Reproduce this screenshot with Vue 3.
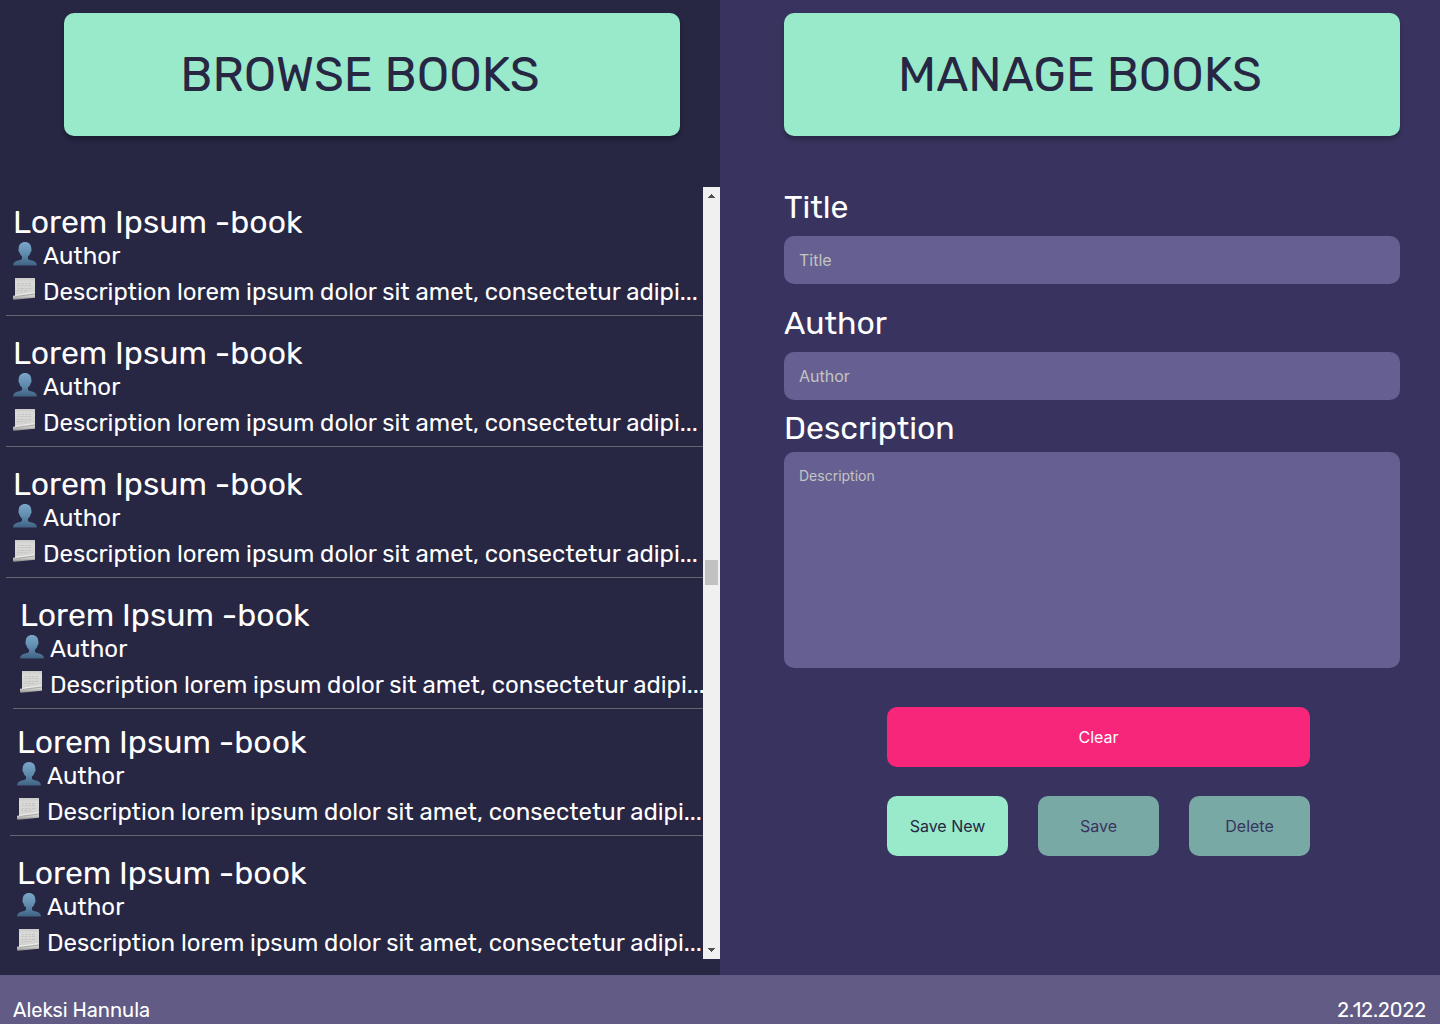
<script setup>
import { ref } from 'vue'

const books = ref([
  { id: 1, shift: '' },
  { id: 2, shift: '' },
  { id: 3, shift: '' },
  { id: 4, shift: 'shift-large' },
  { id: 5, shift: 'shift-small tight' },
  { id: 6, shift: 'shift-small' },
].map((b) => ({
  ...b,
  title: 'Lorem Ipsum -book',
  author: 'Author',
  description: 'Description lorem ipsum dolor sit amet, consectetur adipi...',
})))

const form = ref({ title: '', author: '', description: '' })

function clearForm() {
  form.value = { title: '', author: '', description: '' }
}
</script>

<template>
  <div class="page">
    <svg class="symbols" aria-hidden="true">
      <defs>
        <linearGradient id="person-fill" x1="0" y1="0" x2="0" y2="1">
          <stop offset="0" stop-color="#7ba6c9" />
          <stop offset="0.5" stop-color="#608cae" />
          <stop offset="1" stop-color="#416384" />
        </linearGradient>
        <linearGradient id="paper-fill" x1="0" y1="0" x2="0" y2="1">
          <stop offset="0" stop-color="#cacac8" />
          <stop offset="0.2" stop-color="#dadad8" />
          <stop offset="1" stop-color="#cfcfcd" />
        </linearGradient>
        <linearGradient id="roll-fill" x1="0" y1="0" x2="0" y2="1">
          <stop offset="0" stop-color="#e0e0de" />
          <stop offset="0.5" stop-color="#c4c4c2" />
          <stop offset="1" stop-color="#858583" />
        </linearGradient>
        <symbol id="icon-person" viewBox="0 0 24 24">
          <path
            fill="url(#person-fill)"
            d="M12 0C8.200 0 5.700 2.400 5.700 6.200c0 .8-.4 1.200-.2 2.300.2 1 .7 1.300 1 2.200.5 1.700 1.300 2.800 2.500 3.800v2c0 1.300-1.800 1.500-4.200 2.100C1.800 19.400.3 20.500 0 23.500h24c-.3-3-1.800-4.100-4.800-4.900-2.400-.6-4.200-.8-4.200-2.100v-2c1.200-1 2-2.100 2.500-3.800.3-.9.800-1.200 1-2.200.2-1.100-.2-1.500-.2-2.300C18.300 2.400 15.800 0 12 0z"
          />
        </symbol>
        <symbol id="icon-page" viewBox="0 0 24 24">
          <path fill="url(#paper-fill)" d="M2 0h20v19L2 20z" />
          <path
            stroke="#c4c4c2"
            stroke-width="1"
            stroke-dasharray="2 1 3 1"
            fill="none"
            d="M5 5.500h13M4.500 7.500H19M5 10.500h13M4 12.500h11"
          />
          <path
            fill="url(#roll-fill)"
            d="M0 18.500c0-.6.500-.9 1.200-.9.500 0 .8.500 1.500.4L22 15.600v4.100L1.600 21.800C.5 21.900 0 21.400 0 20.600z"
          />
          <path stroke="#a9a9a7" fill="none" d="M2.500 18.500L22 16" />
          <path stroke="#eeeeec" fill="none" d="M2 17.300L21.500 14.500" />
        </symbol>
      </defs>
    </svg>

    <main class="columns">
      <section class="panel browse">
        <h1 class="banner">BROWSE BOOKS</h1>
        <div class="viewport">
          <ul class="list">
            <li v-for="book in books" :key="book.id" class="book" :class="book.shift">
              <h2 class="book-title">{{ book.title }}</h2>
              <p class="line">
                <svg class="icon" aria-hidden="true"><use href="#icon-person" /></svg>
                <span>{{ book.author }}</span>
              </p>
              <p class="line">
                <svg class="icon" aria-hidden="true"><use href="#icon-page" /></svg>
                <span>{{ book.description }}</span>
              </p>
            </li>
          </ul>
          <div class="scrollbar" aria-hidden="true">
            <svg class="arrow" viewBox="0 0 17 17" shape-rendering="crispEdges">
              <path fill="#505050" d="M8 7h1v1h1v1h1v1h1v1H5v-1h1V9h1V8h1z" />
            </svg>
            <div class="track-before"></div>
            <div class="thumb"></div>
            <div class="track-after"></div>
            <svg class="arrow" viewBox="0 0 17 17" shape-rendering="crispEdges">
              <path fill="#505050" d="M5 6h7v1h-1v1h-1v1H9v1H8V9H7V8H6V7H5z" />
            </svg>
          </div>
        </div>
      </section>

      <section class="panel manage">
        <h1 class="banner">MANAGE BOOKS</h1>
        <form class="form" @submit.prevent>
          <div class="field">
            <label for="title">Title</label>
            <input id="title" v-model="form.title" type="text" placeholder="Title" />
          </div>
          <div class="field">
            <label for="author">Author</label>
            <input id="author" v-model="form.author" type="text" placeholder="Author" />
          </div>
          <div class="field field-text">
            <label for="description">Description</label>
            <textarea id="description" v-model="form.description" placeholder="Description"></textarea>
          </div>
          <div class="actions">
            <button type="button" class="button clear" @click="clearForm">Clear</button>
            <div class="action-row">
              <button type="submit" class="button">Save New</button>
              <button type="button" class="button" disabled>Save</button>
              <button type="button" class="button" disabled>Delete</button>
            </div>
          </div>
        </form>
      </section>
    </main>

    <footer class="footer">
      <span>Aleksi Hannula</span>
      <span>2.12.2022</span>
    </footer>
  </div>
</template>

<style>
body {
  margin: 0;
  background: #272643;
}
</style>

<style scoped>
.page {
  display: flex;
  flex-direction: column;
  height: 100vh;
  color: #ffffff;
  font-family: Rubik, Inter, sans-serif;
}

.symbols {
  position: absolute;
  width: 0;
  height: 0;
}

.columns {
  display: grid;
  grid-template-columns: minmax(0, 1fr) minmax(0, 1fr);
  grid-template-rows: minmax(0, 1fr);
  flex: 1;
  min-height: 0;
}

.panel {
  display: flex;
  flex-direction: column;
  box-sizing: border-box;
  min-height: 0;
  padding: 13px 0 16px;
}

.browse {
  background: #272643;
}

.manage {
  background: #38345f;
}

.banner {
  flex: none;
  margin: 0 40px 0 64px;
  padding: 32px 24px 31px 0;
  border-radius: 10px;
  background: #98eaca;
  box-shadow: 0 4px 4px rgba(0, 0, 0, 0.25);
  color: #272643;
  font-size: 48px;
  font-weight: 400;
  line-height: 60px;
  text-align: center;
}

.viewport {
  display: flex;
  flex: 1;
  min-height: 0;
  margin-top: 49px;
}

.list {
  flex: 1;
  min-width: 0;
  margin: 0;
  padding: 0;
  overflow: hidden;
  list-style: none;
}

.book {
  margin-left: 6px;
  padding: 19px 0 9px 7px;
  border-bottom: 1px solid #66656f;
  white-space: nowrap;
}

.shift-small {
  margin-left: 10px;
}

.shift-large {
  margin-left: 13px;
}

.tight {
  padding-top: 15px;
}

.book-title {
  margin: 0 0 2px;
  font-size: 32px;
  font-weight: 400;
  line-height: 36px;
}

.line {
  display: flex;
  gap: 6px;
  margin: 0;
  font-size: 24px;
  line-height: 28px;
}

.line + .line {
  margin-top: 8px;
}

.icon {
  flex: none;
  width: 24px;
  height: 24px;
}

.scrollbar {
  display: flex;
  flex-direction: column;
  flex: none;
  width: 17px;
  margin-top: 2px;
  background: #f0f0f0;
}

.arrow {
  flex: none;
  width: 17px;
  height: 17px;
}

.track-before {
  flex: 356;
}

.track-after {
  flex: 357;
}

.thumb {
  flex: none;
  height: 25px;
  margin: 0 2px;
  background: #c1c1c1;
}

.form {
  display: flex;
  flex-direction: column;
  gap: 20px;
  margin: 52px 40px 0 64px;
}

.field {
  display: flex;
  flex-direction: column;
  gap: 10px;
}

.field-text {
  gap: 5px;
  margin-top: -11px;
}

label {
  font-size: 32px;
  line-height: 38px;
}

input,
textarea {
  box-sizing: border-box;
  width: 100%;
  height: 48px;
  padding: 0 15px;
  border: 0;
  border-radius: 10px;
  outline: 0;
  background: #656091;
  color: #ffffff;
  font-family: Inter, sans-serif;
  font-size: 16px;
}

textarea {
  height: 216px;
  padding: 14px 15px;
  font-size: 14px;
  line-height: 20px;
  resize: none;
}

input::placeholder,
textarea::placeholder {
  color: #c4c4c4;
  opacity: 1;
}

.actions {
  display: flex;
  flex-direction: column;
  gap: 29px;
  margin: 19px 90px 0 103px;
}

.action-row {
  display: flex;
  gap: 30px;
}

.button {
  flex: 1;
  min-width: 0;
  padding: 20px 0;
  border: 0;
  border-radius: 10px;
  background: #98eaca;
  color: #272643;
  font-family: Inter, sans-serif;
  font-size: 16px;
  line-height: 20px;
}

.button:disabled {
  background: #78a9a5;
  color: #38345f;
}

.clear {
  background: #f7267b;
  color: #ffffff;
}

.footer {
  display: flex;
  justify-content: space-between;
  padding: 23px 14px 2px 13px;
  background: #615b85;
  font-size: 20px;
  line-height: 24px;
}
</style>
